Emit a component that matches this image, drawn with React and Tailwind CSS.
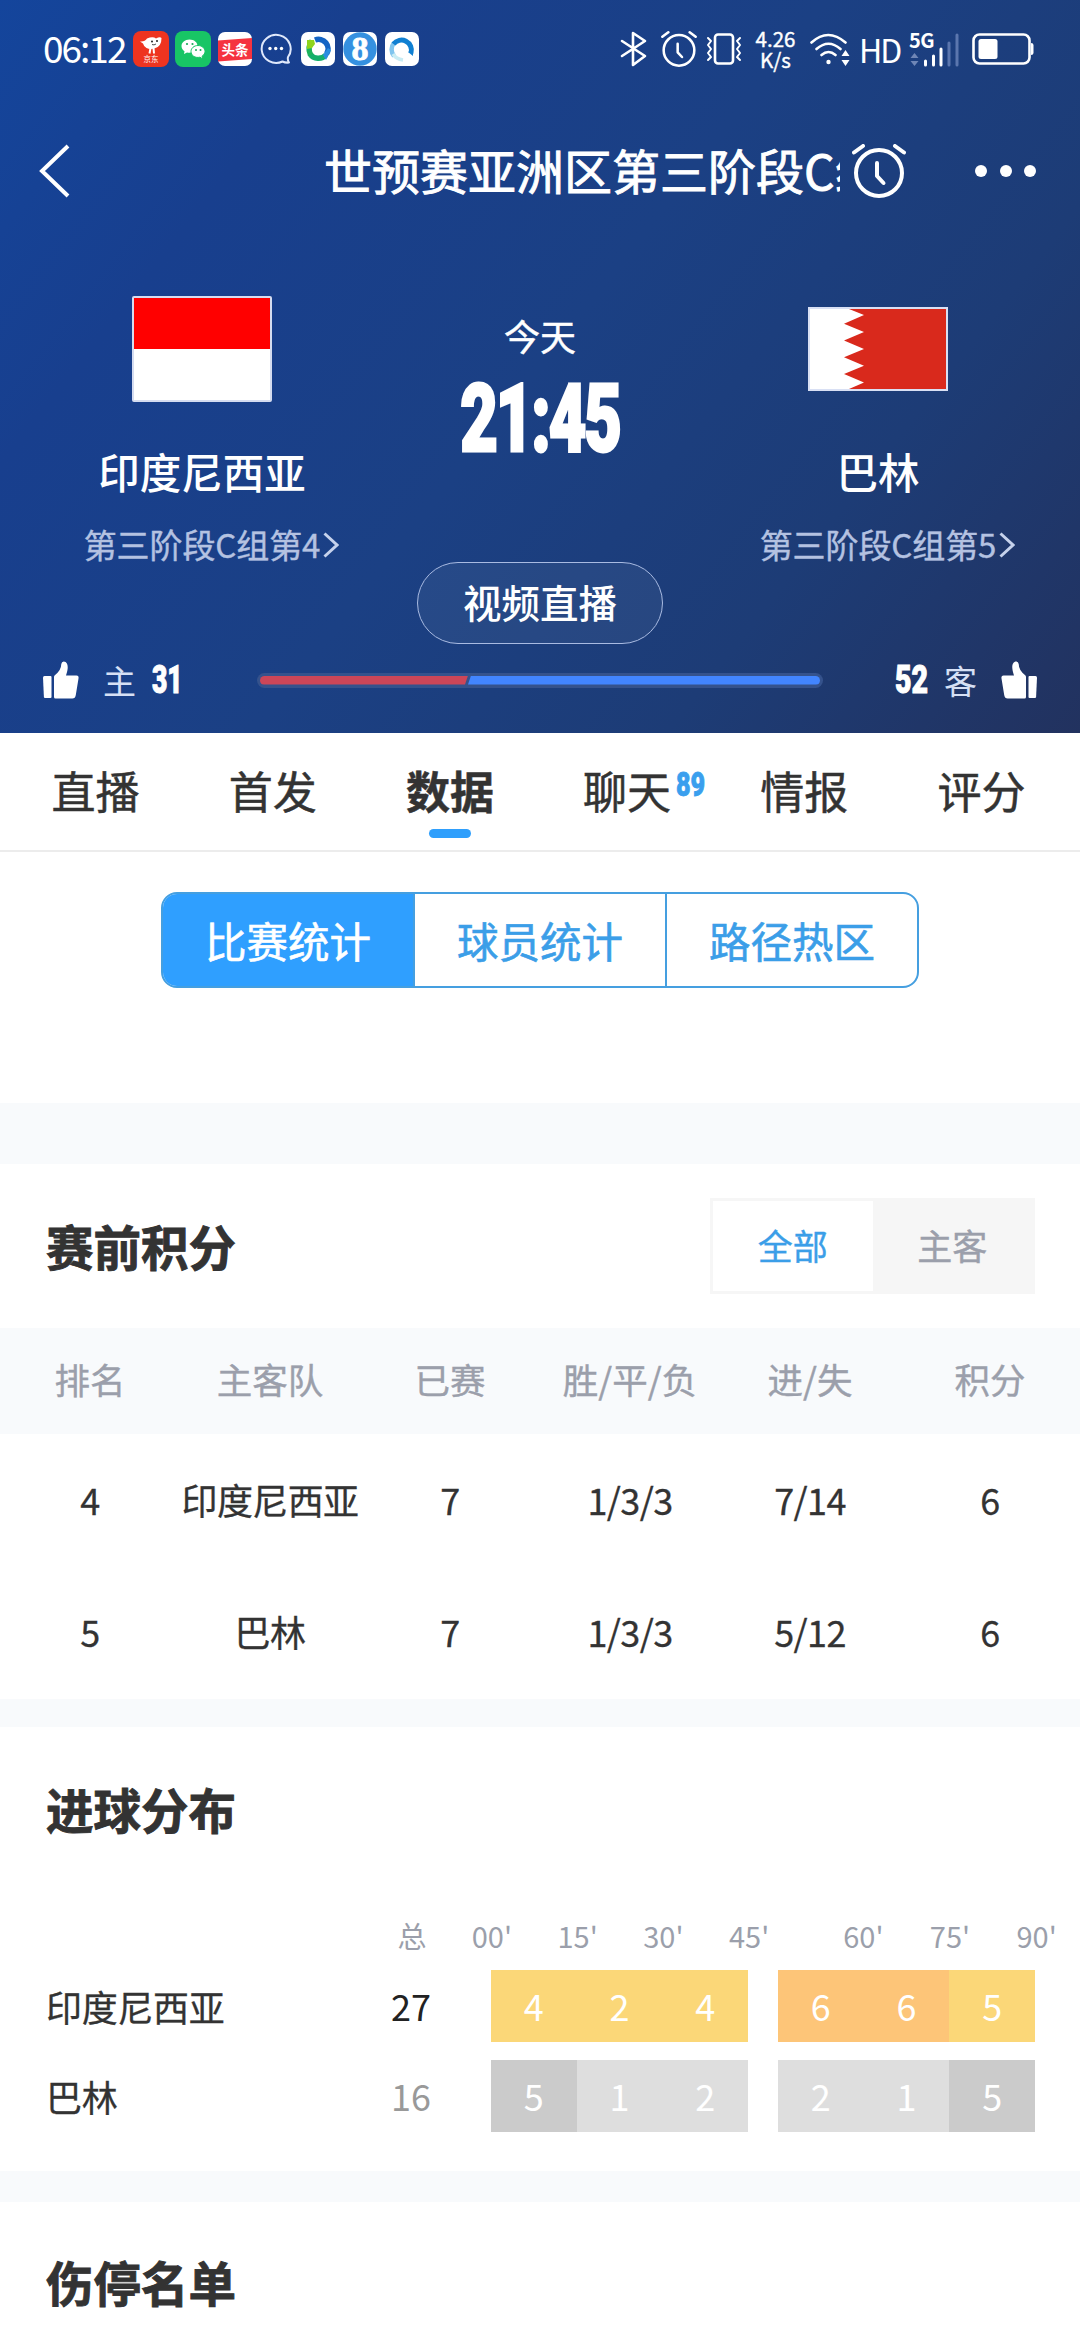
import React, { useState } from 'react';

const tabs = [
    { name: '直播' },
    { name: '首发' },
    { name: '数据' },
    { name: '聊天', count: 89 },
    { name: '情报' },
    { name: '评分' },
];

const segments = ['比赛统计', '球员统计', '路径热区'];

const standings = [
    { rank: 4, team: '印度尼西亚', played: 7, record: '1/3/3', goals: '7/14', points: 6 },
    { rank: 5, team: '巴林', played: 7, record: '1/3/3', goals: '5/12', points: 6 },
];

const AlarmIcon = ({ className, strokeWidth }) => (
    <svg className={className} viewBox="0 0 54 54" fill="none" stroke="currentColor" strokeWidth={strokeWidth} strokeLinecap="round" strokeLinejoin="round">
        <circle cx="27" cy="29" r="23" />
        <path d="M25 19v13l6.500 7" />
        <path d="M2 8.500L11 2M43 2l9 6.500" />
    </svg>
);

const ThumbIcon = ({ className }) => (
    <svg className={className} viewBox="0 0 36 38" fill="currentColor">
        <path d="M0 16.500q0-1.500 1.500-1.500H7.500q1 0 1 1v20q0 1-1 1H2q-1 0-1.100-1z" />
        <path d="M11 16q0-1 .8-1.800C16 11 18.300 7 18.300 3q.4-2.500 2.400-2.500c3 0 4.200 3 4 6.500-.2 3-1.200 5.500-1.700 7.500h10.500q2.500 0 2 3l-2.700 16.500q-.5 3.500-3.500 3.500H12.500q-1.500 0-1.500-1.500z" />
    </svg>
);

const AppIcons = () => (
    <div className="ml-2 flex items-center">
        <svg className="size-9" viewBox="0 0 36 36">
            <rect width="36" height="36" rx="8" fill="#ee3420" />
            <path d="M7 10.500q5 .5 7-3 6-2.500 9 0 4-2 5.500-.5 0 8-6 10-5 2-9 0-3-2-3.500-4.500z" fill="#fff" />
            <path d="M17.500 17l-1 5.500M20.500 17l.5 5.500" stroke="#fff" strokeWidth="2" />
            <circle cx="19" cy="10.500" r="1" fill="#222" />
            <circle cx="24" cy="10" r="1" fill="#222" />
            <path d="M19 13.500q2 1 4-.5" stroke="#222" strokeWidth=".8" fill="none" />
            <text x="18" y="31" fontSize="7.500" textAnchor="middle" fill="#fff">京东</text>
        </svg>
        <svg className="ml-[6px] size-9" viewBox="0 0 36 36">
            <rect width="36" height="36" rx="8" fill="#18c565" />
            <path d="M14.500 8.500C9.800 8.500 6.500 11.500 6.500 15c0 2.200 1.200 4 3 5.200L9 23l3-1.600c5 1.200 10.500-1.400 10.500-6.400 0-3.600-3.400-6.500-8-6.500z" fill="#fff" />
            <path d="M23 14.500c-4 0-7 2.700-7 6 0 4 4 6.800 9 5.700L27.600 28l-.5-2.800c1.700-1.200 2.900-2.800 2.900-4.700 0-3.300-3-6-7-6z" fill="#fff" stroke="#18c565" strokeWidth="1" />
            <g fill="#18a858">
                <circle cx="12" cy="13" r="1.100" />
                <circle cx="17.500" cy="13" r="1.100" />
                <circle cx="21" cy="19" r="1" />
                <circle cx="25.500" cy="19" r="1" />
            </g>
        </svg>
        <svg className="ml-[7px] size-[34px]" viewBox="0 0 34 34">
            <rect width="34" height="34" rx="7" fill="#fff" />
            <path d="M0 8.500L34 6v21L0 29.500z" fill="#f5333f" />
            <text x="17" y="22.500" fontSize="13.500" fontWeight="700" textAnchor="middle" fill="#fff">头条</text>
        </svg>
        <svg className="ml-[8px] h-[34px] w-8" viewBox="0 0 32 34" fill="none" stroke="#dfe8fb" strokeWidth="2">
            <path d="M28 25a14.500 14 0 1 0-5.500 4.500q3 1.500 6.500 1-1.700-2.500-1-5.500z" strokeLinejoin="round" />
            <g fill="#fff" stroke="none">
                <circle cx="10" cy="16.500" r="1.700" />
                <circle cx="15.700" cy="16.500" r="1.700" />
                <circle cx="21.500" cy="16.500" r="1.700" />
            </g>
        </svg>
        <svg className="ml-[9px] size-[34px]" viewBox="0 0 34 34" fill="none">
            <rect width="34" height="34" rx="7" fill="#fff" />
            <path d="M9 22A10 9.500 0 0 0 25 23" stroke="#14b06c" strokeWidth="5.500" />
            <path d="M11 9q-5 6-1.500 14" stroke="#1db35c" strokeWidth="5.500" />
            <path d="M6 8l7 0 1 4-3 4-5 1z" fill="#8fd41c" />
            <path d="M14 8a9.500 9.500 0 0 1 11.500 14" stroke="#1464c4" strokeWidth="5.500" />
            <path d="M25 28l5-10-3-2-5 7z" fill="#2a8de0" />
            <path d="M12 15l5-3 5 1 1 7-4-1-1 3-4-3z" fill="#fff" />
        </svg>
        <svg className="ml-[8px] size-[34px]" viewBox="0 0 34 34">
            <rect width="34" height="34" rx="7" fill="#fff" />
            <circle cx="17" cy="17" r="16.700" fill="#3590e0" />
            <text x="17" y="28" fontSize="34" fontWeight="700" textAnchor="middle" fill="#fff" stroke="#fff" strokeWidth=".8" className="font-['Liberation_Serif',serif]">8</text>
        </svg>
        <svg className="ml-[8px] size-[34px]" viewBox="0 0 34 34" fill="none">
            <rect width="34" height="34" rx="7" fill="#fff" />
            <path d="M9 24a10 10 0 0 1 0-13" stroke="#7fc4ee" strokeWidth="4.500" />
            <path d="M8.500 12a10 10 0 0 1 17.500 9" stroke="#0f7fd2" strokeWidth="5" />
            <path d="M23 20l5-2v6z" fill="#0f7fd2" />
            <path d="M8 22q3 5 10 6" stroke="#c8ecf4" strokeWidth="3.500" />
        </svg>
    </div>
);

const StatusIcons = () => (
    <div className="flex items-center text-white">
        <svg className="h-9 w-[27px]" viewBox="0 0 27 36" fill="none" stroke="currentColor" strokeWidth="2.600" strokeLinejoin="round" strokeLinecap="round">
            <path d="M2 10l23 15-12 9V2l12 8L2 25" />
        </svg>
        <AlarmIcon className="ml-[14px] size-[36px]" strokeWidth={3.800} />
        <svg className="ml-[9px] h-8 w-9" viewBox="0 0 36 32" fill="none" stroke="currentColor" strokeLinejoin="round" strokeLinecap="round">
            <rect x="9" y="1.500" width="18" height="29" rx="3" strokeWidth="2.600" />
            <path d="M2 5l3 3-3 4 3 4-3 4 3 4-3 3M34 5l-3 3 3 4-3 4 3 4-3 4 3 3" strokeWidth="2" />
        </svg>
        <div className="ml-[12px] flex w-[43px] flex-col items-center text-[20.500px] leading-[21px] [-webkit-text-stroke:0.4px_white]">
            <span>4.26</span>
            <span>K/s</span>
        </div>
        <svg className="ml-[13px] h-9 w-10" viewBox="0 0 40 36" fill="none" stroke="currentColor" strokeWidth="2.600" strokeLinecap="round">
            <path d="M1.500 11.500q16.500-15 34 0M6.500 18q12-10.500 24 0M11.500 24q7-6 14 0" />
            <circle cx="18.500" cy="31" r="2.200" fill="currentColor" stroke="none" />
            <path d="M35.500 19l4 6h-8zM35.500 35l4-6h-8z" fill="currentColor" stroke="none" />
        </svg>
        <span className="ml-[9px] w-[40px] text-[32px] leading-10 tracking-[-2px]">HD</span>
        <div className="relative ml-[10px] h-9 w-[52px]">
            <b className="absolute -top-[3px] left-0 text-[20px] leading-6 tracking-[-0.5px]">5G</b>
            <svg className="h-9 w-[52px]" viewBox="0 0 52 36" fill="none" stroke="currentColor" strokeWidth="3" strokeLinecap="round">
                <path d="M5.500 22l4 5h-8zM5.500 35l4-5h-8z" fill="#6f86b6" stroke="none" />
                <path d="M16.500 30v4M24.500 25v9M32 18v16" />
                <path d="M40 12v22M48 4v30" stroke="#5b76ae" />
            </svg>
        </div>
        <svg className="ml-[11px] h-8 w-[62px]" viewBox="0 0 62 32" fill="none" stroke="currentColor" strokeWidth="2.600">
            <rect x="1.500" y="1.500" width="56" height="29" rx="6" />
            <rect x="6.500" y="6" width="19" height="20" rx="2.500" fill="currentColor" stroke="none" />
            <path d="M59 10q2.500 0 2.500 2v8q0 2-2.500 2z" fill="currentColor" stroke="none" />
        </svg>
    </div>
);

const IndonesiaFlag = () => (
    <div className="flex h-[106px] w-[140px] flex-col rounded-[2px] border-2 border-[#d5dcf0] bg-white">
        <div className="h-[51px] bg-[#ff0000]" />
    </div>
);

const BahrainFlag = () => (
    <svg className="h-[84px] w-[140px]" viewBox="0 0 140 84">
        <rect width="140" height="84" fill="#d9e0f4" />
        <rect x="2" y="2" width="136" height="80" fill="#d9291c" />
        <path d="M2 2H41L56 8 36 16.700 56 25 36 33.500 56 42 36 50.300 56 58.700 36 67 56 75.500 41 82H2z" fill="#fff" />
    </svg>
);

const Team = ({ flag, name, rank }) => (
    <div className="flex w-[300px] flex-col items-center">
        <div className="flex h-[106px] items-center">{flag}</div>
        <h2 className="mt-[48px] text-[41.500px] font-medium leading-[42px] text-white">{name}</h2>
        <div className="ml-[19px] mt-[36px] flex items-center gap-[3px] text-[#b4c2e1]">
            <span className="text-[33px] leading-[33px] tracking-[-0.1px] [-webkit-text-stroke:0.4px_#b4c2e1]">{rank}</span>
            <svg className="h-[26px] w-4" viewBox="0 0 16 26" fill="none" stroke="#c6d2ec" strokeWidth="3">
                <path d="M1.500 1.500L14 13 1.500 24.500" />
            </svg>
        </div>
    </div>
);

const Header = () => (
    <header className="h-[733px] bg-[linear-gradient(128deg,#14459c_0%,#183f8e_22%,#1b4084_50%,#1d3c76_75%,#22325f_100%)]">
        <div className="flex h-[98px] items-center justify-between pl-[43px] pr-[46px] text-white">
            <div className="flex items-center">
                <span className="w-[82px] pb-[3px] text-[37px] leading-none tracking-[-2px]">06:12</span>
                <AppIcons />
            </div>
            <StatusIcons />
        </div>

        <div className="flex h-[146px] items-center pl-[39px] pr-[43px] text-white">
            <svg className="h-[54px] w-[31px]" viewBox="0 0 31 54" fill="none" stroke="currentColor" strokeWidth="4">
                <path d="M29 2L3 27l26 25" />
            </svg>
            <h1 className="ml-[254px] w-[516px] overflow-hidden whitespace-nowrap pb-[4px] text-[48px] leading-[60px] [-webkit-text-stroke:0.9px_white]">世预赛亚洲区第三阶段C组</h1>
            <AlarmIcon className="ml-3 size-[54px]" strokeWidth={4} />
            <div className="ml-auto flex gap-[12.500px] pr-[1px]">
                <i className="size-3 rounded-full bg-white" />
                <i className="size-3 rounded-full bg-white" />
                <i className="size-3 rounded-full bg-white" />
            </div>
        </div>

        <div className="flex h-[408px] justify-between pl-[52px] pr-[52px] pt-[52px]">
            <Team flag={<IndonesiaFlag />} name="印度尼西亚" rank="第三阶段C组第4" />
            <div className="flex flex-col items-center pt-[21px] text-white">
                <span className="text-[36px] leading-9 [-webkit-text-stroke:0.5px_white]">今天</span>
                <span className="mt-[12px] w-[164px] text-center text-[94px] leading-[90px]">
                    <b className="-ml-[50px] inline-block w-[264px] scale-x-[0.69] font-['Roboto',sans-serif] font-black tracking-[-3px] [-webkit-text-stroke:3px_white]">21:45</b>
                </span>
                <button className="mt-[98px] h-[82px] w-[246px] rounded-full border border-[#a9bbe2] bg-white/5 pb-1 text-[38.500px] font-medium leading-none">视频直播</button>
            </div>
            <Team flag={<BahrainFlag />} name="巴林" rank="第三阶段C组第5" />
        </div>

        <div className="flex h-[56px] items-center pl-[43px] pr-[43px] text-white">
            <ThumbIcon className="h-[38px] w-9" />
            <span className="ml-6 w-[33px] text-[33px] leading-none text-[#d6e0f5]">主</span>
            <b className="ml-4 w-[30px] origin-left scale-x-[0.68] font-['Roboto',sans-serif] text-[39px] font-black leading-none [-webkit-text-stroke:1px_white]">31</b>
            <div className="ml-[75px] flex h-[15px] w-[566px] rounded-full bg-[#35528c] p-[3px]">
                <div className="h-[9px] w-[208px] rounded-l-full bg-[#cc4658] [clip-path:polygon(0_0,100%_0,calc(100%-3px)_100%,0_100%)]" />
                <div className="h-[9px] flex-1 rounded-r-full bg-[#4285ff] [clip-path:polygon(3px_0,100%_0,100%_100%,0_100%)]" />
            </div>
            <b className="ml-[72px] w-[34px] origin-left scale-x-[0.73] font-['Roboto',sans-serif] text-[39px] font-black leading-none [-webkit-text-stroke:1px_white]">52</b>
            <span className="ml-[15px] w-[33px] text-[33px] leading-none text-[#d6e0f5]">客</span>
            <ThumbIcon className="ml-auto h-[38px] w-9 -scale-x-100" />
        </div>
    </header>
);

const SectionTitle = ({ children }) => (
    <h3 className="text-[47.500px] font-bold leading-[48px] text-[#333] [-webkit-text-stroke:0.9px_#333]">{children}</h3>
);

const Standings = () => {
    const [mode, setMode] = useState('全部');
    return (
        <section>
            <div className="flex h-[164px] items-center justify-between pl-[46px] pr-[45px]">
                <SectionTitle>赛前积分</SectionTitle>
                <div className="flex h-[96px] w-[325px] border-[3px] border-[#f6f6f6] bg-[#f6f6f6] text-[35px] leading-none">
                    {['全部', '主客'].map((item) => (
                        <button
                            key={item}
                            onClick={() => setMode(item)}
                            className={`flex-1 pb-1 [-webkit-text-stroke:0.4px_currentColor] ${mode === item ? 'bg-white text-[#3b9ee8]' : 'text-[#9b9fab]'}`}
                        >
                            {item}
                        </button>
                    ))}
                </div>
            </div>
            <div className="grid h-[106px] grid-cols-6 items-center bg-[#f8fafc] pb-[4px] text-center text-[35.500px] leading-none text-[#9b9fab] [-webkit-text-stroke:0.4px_#9b9fab]">
                <span>排名</span>
                <span>主客队</span>
                <span>已赛</span>
                <span>胜/平/负</span>
                <span>进/失</span>
                <span>积分</span>
            </div>
            <div className="h-[265px]">
                {standings.map((row) => (
                    <div key={row.rank} className="grid h-[132px] grid-cols-6 items-center pb-[3px] text-center text-[36px] leading-none tracking-[-0.6px] text-[#333] [-webkit-text-stroke:0.3px_#333]">
                        <span>{row.rank}</span>
                        <span className="whitespace-nowrap">{row.team}</span>
                        <span>{row.played}</span>
                        <span>{row.record}</span>
                        <span>{row.goals}</span>
                        <span>{row.points}</span>
                    </div>
                ))}
            </div>
        </section>
    );
};

const Y = 'bg-[#fbd778]';
const O = 'bg-[#fdc578]';
const G = 'bg-[#cbcbcb]';
const L = 'bg-[#dedede]';

const goals = [
    { team: '印度尼西亚', total: 27, color: 'text-[#222]', halves: [[[4, Y], [2, Y], [4, Y]], [[6, O], [6, O], [5, Y]]] },
    { team: '巴林', total: 16, color: 'text-[#999]', halves: [[[5, G], [1, L], [2, L]], [[2, L], [1, L], [5, G]]] },
];

const GoalDistribution = () => (
    <section className="h-[444px] pt-[58px]">
        <div className="pl-[46px]">
            <SectionTitle>进球分布</SectionTitle>
        </div>
        <div className="mt-[87px] flex h-[30px] items-center text-center text-[29px] leading-none text-[#9b9fab]">
            <span className="ml-[382px] w-[60px]">总</span>
            <div className="ml-[7px] grid w-[343px] grid-cols-4">
                {["00'", "15'", "30'", "45'"].map((t) => <span key={t}>{t}</span>)}
            </div>
            <div className="ml-[28px] grid w-[260px] grid-cols-3">
                {["60'", "75'", "90'"].map((t) => <span key={t}>{t}</span>)}
            </div>
        </div>
        <div className="mt-[20px] flex flex-col gap-[18px]">
            {goals.map((row) => (
                <div key={row.team} className="flex h-[72px] items-center pl-[46px] text-[36px] leading-none">
                    <span className="w-[325px] pb-[1px] tracking-[-0.3px] text-[#333] [-webkit-text-stroke:0.3px_#333]">{row.team}</span>
                    <span className={`w-[80px] pb-[2px] text-center ${row.color}`}>{row.total}</span>
                    <div className="ml-10 flex gap-[30px] text-white">
                        {row.halves.map((half, i) => (
                            <div key={i} className="grid h-[72px] w-[257px] grid-cols-3">
                                {half.map(([n, bg], j) => (
                                    <span key={j} className={`flex items-center justify-center pb-[2px] ${bg}`}>{n}</span>
                                ))}
                            </div>
                        ))}
                    </div>
                </div>
            ))}
        </div>
    </section>
);

const App = () => {
    const [tab, setTab] = useState('数据');
    const [segment, setSegment] = useState('比赛统计');

    return (
        <div className="h-[2325px] w-[1080px] overflow-hidden bg-white font-['Noto_Sans_CJK_SC',sans-serif]">
            <Header />

            <nav className="grid h-[119px] grid-cols-6 border-b-2 border-[#ececec] pl-[7px] pr-[10px]">
                {tabs.map((item) => (
                    <button key={item.name} onClick={() => setTab(item.name)} className="relative flex flex-col items-center pt-[33px]">
                        <span className={`text-[44px] leading-[48px] text-[#333] [-webkit-text-stroke:0.5px_#333] ${tab === item.name ? 'font-bold' : ''}`}>{item.name}</span>
                        {item.count && (
                            <b className="absolute left-[137px] top-[35px] origin-left scale-x-[0.74] font-['Roboto',sans-serif] text-[34px] font-black leading-8 text-[#3a9fee] [-webkit-text-stroke:0.8px_#3a9fee]">{item.count}</b>
                        )}
                        {tab === item.name && <i className="mt-[15px] h-[9px] w-[42px] rounded-full bg-[#2f9ffc]" />}
                    </button>
                ))}
            </nav>

            <div className="flex h-[251px] justify-center pt-10">
                <div className="flex h-24 w-[758px] divide-x-2 divide-[#459fe0] overflow-hidden rounded-[16px] border-2 border-[#459fe0]">
                    {segments.map((item) => (
                        <button
                            key={item}
                            onClick={() => setSegment(item)}
                            className={`flex-1 pt-[1px] text-[41.500px] leading-none [-webkit-text-stroke:0.6px_currentColor] ${segment === item ? 'bg-[#2f9fff] text-white' : 'text-[#3b9ee8]'}`}
                        >
                            {item}
                        </button>
                    ))}
                </div>
            </div>

            <div className="h-[61px] bg-[#f8fafc]" />
            <Standings />
            <div className="h-[28px] bg-[#f8fafc]" />
            <GoalDistribution />
            <div className="h-[31px] bg-[#f8fafc]" />
            <section className="pl-[46px] pt-[56px]">
                <SectionTitle>伤停名单</SectionTitle>
            </section>
        </div>
    );
};

export default App;
